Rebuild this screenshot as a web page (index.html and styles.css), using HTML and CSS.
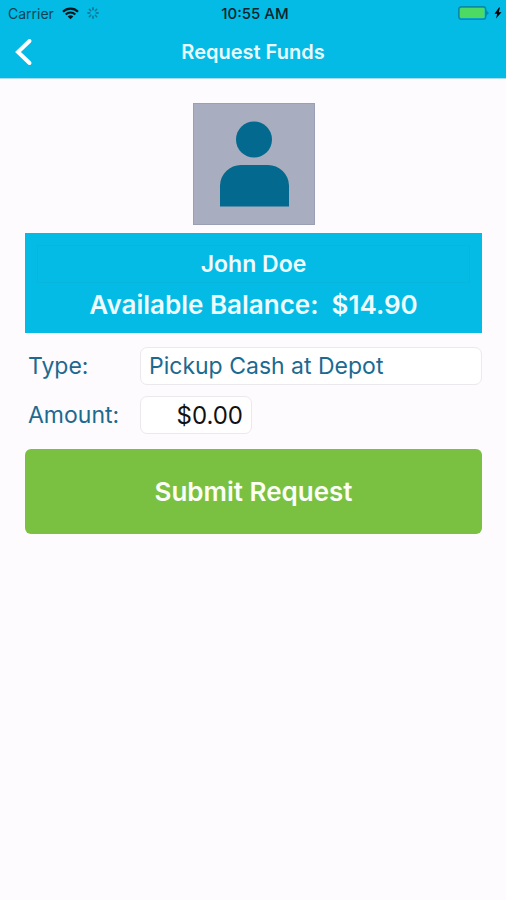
FILE: index.html
```html
<!DOCTYPE html>
<html lang="en">
<head>
<meta charset="utf-8">
<meta name="viewport" content="width=device-width, initial-scale=1">
<title>Request Funds</title>
<link rel="stylesheet" href="styles.css">
</head>
<body>
<header class="top">
  <div class="status">
    <div class="status-left">
      <span class="carrier">Carrier</span>
      <svg class="wifi" viewBox="0 0 17 13" width="17" height="13" aria-hidden="true">
        <path d="M1 4.800a10.600 10.600 0 0 1 15 0M3.700 7.500a6.800 6.800 0 0 1 9.600 0" fill="none" stroke="currentColor" stroke-width="2.200"/>
        <path d="M5.700 9.500a4 4 0 0 1 5.600 0L8.500 12.300z" fill="currentColor"/>
      </svg>
      <svg class="spinner" viewBox="0 0 12 12" width="12" height="12" aria-hidden="true">
        <path d="M6 .8v2M6 9.200v2M.8 6h2M9.200 6h2M2.300 2.300l1.400 1.400M8.300 8.300l1.400 1.400M2.300 9.700l1.400-1.400M8.300 3.700l1.400-1.400" stroke="currentColor" stroke-width="1.500" stroke-linecap="round"/>
      </svg>
    </div>
    <span class="clock">10:55 AM</span>
    <div class="status-right">
      <svg viewBox="0 0 32 14" width="32" height="14" aria-hidden="true">
        <rect x=".7" y=".7" width="27" height="12.600" rx="2.500" fill="none" stroke="#078aa8" stroke-width="1.400"/>
        <rect x="2" y="2" width="24.500" height="10" rx="1" fill="#4cd964"/>
        <path d="M28 4l3 3-3 3z" fill="#078aa8"/>
      </svg>
      <svg viewBox="0 0 8 12" width="8" height="12" aria-hidden="true">
        <path d="M5 .5.500 6.800h2.700L2 11.500l5.500-6.300H4.700L6 .5z" fill="currentColor"/>
      </svg>
    </div>
  </div>
  <nav class="nav">
    <button class="back" type="button" aria-label="Back">
      <svg viewBox="0 0 18 28" width="18" height="28" aria-hidden="true">
        <path d="M14.500 3 3 14l11.500 11" fill="none" stroke="currentColor" stroke-width="4" stroke-linecap="round"/>
      </svg>
    </button>
    <h1 class="title">Request Funds</h1>
  </nav>
</header>
<main class="content">
  <svg class="avatar" viewBox="0 0 122 122" width="122" height="122" role="img" aria-label="Profile picture">
    <rect x=".5" y=".5" width="121" height="121" fill="#a8aebf" stroke="#9a9fb3"/>
    <circle cx="61" cy="36.500" r="18" fill="#03698f"/>
    <path d="M27 103.500V82.500a21 21 0 0 1 21-20.500h27a21 21 0 0 1 21 20.500v21z" fill="#03698f"/>
  </svg>
  <section class="account">
    <h2 class="name">John Doe</h2>
    <p class="balance">Available Balance:&nbsp; $14.90</p>
  </section>
  <form class="request">
    <label class="label" for="type">Type:</label>
    <select class="field type" id="type">
      <option>Pickup Cash at Depot</option>
    </select>
    <label class="label" for="amount">Amount:</label>
    <input class="field amount" id="amount" type="text" inputmode="decimal" value="$0.00">
    <button class="submit" type="button">Submit Request</button>
  </form>
</main>
</body>
</html>
```
FILE: styles.css
```css
* {
  box-sizing: border-box;
}

body {
  margin: 0;
  min-height: 100vh;
  background: #fdfbfe;
  font-family: Inter, "Liberation Sans", sans-serif;
}

.top {
  background: #03bbe5;
  border-bottom: 1px solid #a6dcee;
}

.status {
  display: grid;
  grid-template-columns: 1fr auto 1fr;
  align-items: center;
  height: 26px;
  padding: 0 4px 0 8px;
  font-size: 14px;
  color: #08242c;
}

.status-left,
.status-right {
  display: flex;
  align-items: center;
  gap: 8px;
}

.status-right {
  justify-content: flex-end;
  gap: 4px;
  color: #000;
}

.carrier {
  color: #0b4455;
}

.wifi {
  color: #06161b;
}

.spinner {
  color: #0a7390;
}

.clock {
  font-size: 15px;
  font-weight: 500;
}

.nav {
  display: grid;
  grid-template-columns: 1fr auto 1fr;
  align-items: center;
  height: 52px;
  padding: 0 15px;
}

.back {
  justify-self: start;
  display: flex;
  padding: 0;
  border: 0;
  background: none;
  color: #fff;
}

.title {
  margin: 0;
  font-size: 20px;
  font-weight: 600;
  color: #e9faff;
}

.content {
  display: flex;
  flex-direction: column;
  padding: 24px 24px 24px 25px;
}

.avatar {
  align-self: center;
}

.account {
  margin-top: 8px;
  padding: 12px 12px 8px;
  background: #03bbe5;
  color: #effcff;
  text-align: center;
}

.name,
.balance {
  margin: 0;
  font-weight: 600;
}

.name {
  border: 1px solid #08b5dd;
  font-size: 23px;
  line-height: 36px;
}

.balance {
  padding-top: 2px;
  font-size: 26px;
  line-height: 40px;
}

.request {
  display: grid;
  grid-template-columns: 111px 1fr;
  align-items: center;
  row-gap: 11px;
  margin-top: 14px;
}

.label {
  padding-left: 3px;
  font-size: 23px;
  color: #1c6a90;
}

.field {
  height: 38px;
  margin: 0 0 0 4px;
  padding: 0 8px;
  border: 1px solid #ebe9ed;
  border-radius: 7px;
  background: #fff;
  font-family: inherit;
}

.type {
  appearance: none;
  font-size: 23px;
  color: #1c6a90;
}

.amount {
  width: 112px;
  font-size: 24px;
  color: #111;
  text-align: right;
}

.submit {
  grid-column: 1 / -1;
  height: 85px;
  margin-top: 4px;
  border: 0;
  border-radius: 6px;
  background: #7ac142;
  color: #fbfff6;
  font-family: inherit;
  font-size: 26px;
  font-weight: 600;
}
```
